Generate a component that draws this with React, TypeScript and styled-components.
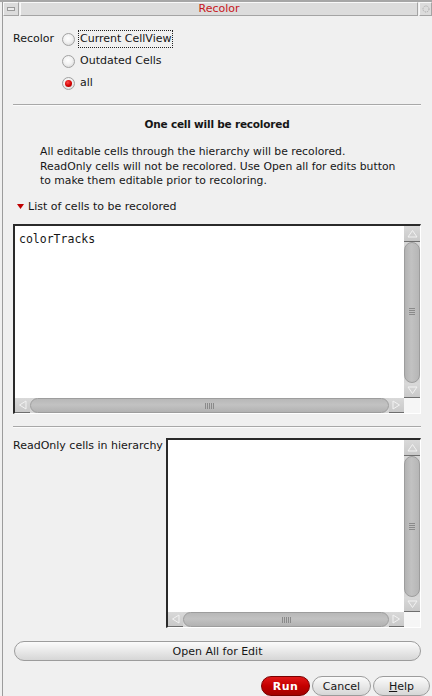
import React from 'react';
import styled, { createGlobalStyle } from 'styled-components';

const GlobalStyle = createGlobalStyle`
  html, body {
    margin: 0;
    padding: 0;
    background: #f0f0f0;
  }
  body {
    font-family: 'DejaVu Sans', 'Liberation Sans', sans-serif;
    font-size: 11px;
    color: #161616;
  }
`;

const Frame = styled.div`
  width: 432px;
  height: 696px;
  box-sizing: border-box;
  padding-left: 2px;
  border-top: 2px solid #a6a6a6;
  background: #f0f0f0;
  overflow: hidden;
`;

const Window = styled.div`
  height: 100%;
  border-left: 1px solid #9c9c9c;
  display: flex;
  flex-direction: column;
`;

const TitleBar = styled.div`
  display: flex;
  height: 14px;
  gap: 1px;
  background: #f0f0f0;
`;

const TitleBox = styled.div<{ $grow?: boolean; $w?: number }>`
  box-sizing: border-box;
  ${(p) => (p.$grow ? 'flex: 1;' : `width: ${p.$w}px;`)}
  height: 14px;
  background: #dcdcdc;
  border-top: 1px solid #f8f8f8;
  border-left: 1px solid #f8f8f8;
  border-right: 1px solid #a4a4a4;
  border-bottom: 1px solid #a4a4a4;
  display: flex;
  align-items: center;
  justify-content: center;
`;

const TitleText = styled.span`
  color: #c8151b;
  font-size: 11px;
  line-height: 12px;
`;

const MinGlyph = styled.div`
  width: 6px;
  height: 2px;
  border: 1px solid #9a9a9a;
  background: #ececec;
`;

const Body = styled.div`
  flex: 1;
  padding: 12px 11px 0 10px;
  display: flex;
  flex-direction: column;
`;

const RadioSection = styled.div`
  display: flex;
`;

const FieldLabel = styled.div<{ $w: number }>`
  width: ${(p) => p.$w}px;
  line-height: 22px;
  flex-shrink: 0;
`;

const Options = styled.div`
  display: flex;
  flex-direction: column;
`;

const Option = styled.label`
  height: 22px;
  display: flex;
  align-items: center;
  gap: 3px;
`;

const RadioDot = styled.span<{ $on?: boolean }>`
  box-sizing: border-box;
  width: 13px;
  height: 13px;
  border-radius: 50%;
  border: 1px solid #a2a2a2;
  background: radial-gradient(circle at 45% 40%, #ffffff 0%, #f2f2f2 45%, #cfcfcf 100%);
  display: flex;
  align-items: center;
  justify-content: center;
  &::after {
    content: '';
    display: ${(p) => (p.$on ? 'block' : 'none')};
    width: 7px;
    height: 7px;
    border-radius: 50%;
    background: radial-gradient(circle at 40% 35%, #ff4a4a 0%, #d20000 55%, #8c0000 100%);
  }
`;

const OptionText = styled.span<{ $focus?: boolean }>`
  padding: 1px 1px;
  border: 1px dotted ${(p) => (p.$focus ? '#222' : 'transparent')};
  line-height: 14px;
`;

const Separator = styled.div<{ $top: number }>`
  margin-top: ${(p) => p.$top}px;
  height: 1px;
  background: #a8a8a8;
  border-bottom: 1px solid #fbfbfb;
`;

const Heading = styled.div`
  margin-top: 11px;
  text-align: center;
  font-weight: bold;
  font-size: 10.5px;
  letter-spacing: -0.2px;
  line-height: 14px;
`;

const Paragraph = styled.p`
  margin: 14px 0 0;
  padding-left: 27px;
  font-size: 10.8px;
  line-height: 14.5px;
`;

const Disclosure = styled.div`
  margin-top: 11px;
  padding-left: 4px;
  display: flex;
  align-items: center;
  gap: 4px;
  line-height: 14px;
`;

const ListBox = styled.div<{ $top: number }>`
  margin-top: ${(p) => p.$top}px;
  box-sizing: border-box;
  height: 190px;
  border-top: 2px solid #2a2a2a;
  border-left: 2px solid #2a2a2a;
  border-right: 1px solid #ffffff;
  border-bottom: 1px solid #ffffff;
  display: grid;
  grid-template-columns: 1fr 16px;
  grid-template-rows: 1fr 15px;
  flex: 1;
`;

const ListContent = styled.div`
  background: #ffffff;
  padding: 6px 4px;
  font-family: 'DejaVu Sans Mono', 'Liberation Mono', monospace;
  font-size: 11.5px;
  line-height: 14px;
`;

const VScroll = styled.div`
  display: flex;
  flex-direction: column;
  background: #d6d6d6;
`;

const HScroll = styled.div`
  display: flex;
  background: #d6d6d6;
`;

const ArrowBtn = styled.div<{ $w: number; $h: number }>`
  box-sizing: border-box;
  width: ${(p) => p.$w}px;
  height: ${(p) => p.$h}px;
  flex-shrink: 0;
  background: linear-gradient(#d9d9d9, #c9c9c9);
  border-bottom: 1px solid #6e6e6e;
  display: flex;
  align-items: center;
  justify-content: center;
`;

const Thumb = styled.div<{ $vertical?: boolean }>`
  box-sizing: border-box;
  flex: 1;
  border: 1px solid #9d9d9d;
  border-radius: 8px;
  background: ${(p) =>
    p.$vertical
      ? 'linear-gradient(to right, #b2b2b2, #c2c2c2 45%, #b6b6b6)'
      : 'linear-gradient(#b8b8b8, #c2c2c2 45%, #b2b2b2)'};
  display: flex;
  align-items: center;
  justify-content: center;
`;

const Corner = styled.div`
  background: #f6f6f6;
`;

const Grip = ({ vertical }: { vertical?: boolean }) =>
  vertical ? (
    <svg width="6" height="8" viewBox="0 0 6 8">
      {[0.5, 2.5, 4.5, 6.5].map((y) => (
        <line key={y} x1="0" x2="6" y1={y} y2={y} stroke="#8a8a8a" strokeWidth="1" />
      ))}
    </svg>
  ) : (
    <svg width="9" height="6" viewBox="0 0 9 6">
      {[0.5, 2.5, 4.5, 6.5, 8.5].map((x) => (
        <line key={x} y1="0" y2="6" x1={x} x2={x} stroke="#8a8a8a" strokeWidth="1" />
      ))}
    </svg>
  );

const Arrow = ({ dir }: { dir: 'up' | 'down' | 'left' | 'right' }) => {
  const pts = {
    up: '1,8 5.5,1.5 10,8 1,8',
    down: '1,1 5.5,7.5 10,1 1,1',
    left: '8,1 1.5,5 8,9 8,1',
    right: '1,1 7.5,5 1,9 1,1',
  }[dir];
  const vert = dir === 'up' || dir === 'down';
  return (
    <svg width={vert ? 11 : 9} height={vert ? 9 : 10} viewBox={vert ? '0 0 11 9' : '0 0 9 10'}>
      <polyline points={pts} fill="none" stroke="#f2f2f2" strokeWidth="1" />
    </svg>
  );
};

const ScrollList = ({ top, children }: { top: number; children?: React.ReactNode }) => (
  <ListBox $top={top}>
    <ListContent>{children}</ListContent>
    <VScroll>
      <ArrowBtn $w={16} $h={16}>
        <Arrow dir="up" />
      </ArrowBtn>
      <Thumb $vertical>
        <Grip vertical />
      </Thumb>
      <ArrowBtn $w={16} $h={15}>
        <Arrow dir="down" />
      </ArrowBtn>
    </VScroll>
    <HScroll>
      <ArrowBtn $w={15} $h={15}>
        <Arrow dir="left" />
      </ArrowBtn>
      <Thumb>
        <Grip />
      </Thumb>
      <ArrowBtn $w={15} $h={15}>
        <Arrow dir="right" />
      </ArrowBtn>
    </HScroll>
    <Corner />
  </ListBox>
);

const ReadOnlySection = styled.div`
  display: flex;
`;

const ReadOnlyLabel = styled.div`
  width: 153px;
  flex-shrink: 0;
  margin-top: 11px;
  line-height: 14px;
`;

const WideButton = styled.button`
  margin-top: 13px;
  margin-left: 1px;
  height: 20px;
  box-sizing: border-box;
  border: 1px solid #9c9c9c;
  border-radius: 10px;
  background: linear-gradient(#fbfbfb, #e9e9e9 50%, #d6d6d6);
  font-family: inherit;
  font-size: 11px;
  color: #161616;
  padding: 0;
`;

const ButtonBar = styled.div`
  margin-top: 15px;
  margin-right: -9px;
  display: flex;
  justify-content: flex-end;
  gap: 2px;
`;

const DialogButton = styled.button<{ $w: number; $primary?: boolean }>`
  width: ${(p) => p.$w}px;
  height: 20px;
  box-sizing: border-box;
  border-radius: 10px;
  padding: 0;
  font-family: inherit;
  font-size: 11px;
  border: 1px solid ${(p) => (p.$primary ? '#7a0000' : '#9c9c9c')};
  background: ${(p) =>
    p.$primary
      ? 'linear-gradient(#e01818, #c40000 50%, #a20000)'
      : 'linear-gradient(#fbfbfb, #e9e9e9 50%, #d6d6d6)'};
  color: ${(p) => (p.$primary ? '#ffffff' : '#161616')};
  font-weight: ${(p) => (p.$primary ? 'bold' : 'normal')};
  letter-spacing: ${(p) => (p.$primary ? '0.5px' : '0')};
`;

const Mnemonic = styled.span`
  text-decoration: underline;
`;

const RedTriangle = () => (
  <svg width="7" height="5" viewBox="0 0 7 5">
    <polygon points="0,0 7,0 3.5,5" fill="#c00000" />
  </svg>
);

export default function App() {
  return (
    <>
      <GlobalStyle />
      <Frame>
        <Window>
          <TitleBar>
            <TitleBox $w={16}>
              <MinGlyph />
            </TitleBox>
            <TitleBox $grow>
              <TitleText>Recolor</TitleText>
            </TitleBox>
            <TitleBox $w={13}>
              <svg width="8" height="8" viewBox="0 0 8 8">
                <circle cx="4" cy="4" r="3" fill="none" stroke="#a8a8a8" strokeDasharray="1.2 1" />
              </svg>
            </TitleBox>
          </TitleBar>
          <Body>
            <RadioSection>
              <FieldLabel $w={49}>Recolor</FieldLabel>
              <Options>
                <Option>
                  <RadioDot />
                  <OptionText $focus>Current CellView</OptionText>
                </Option>
                <Option>
                  <RadioDot />
                  <OptionText>Outdated Cells</OptionText>
                </Option>
                <Option>
                  <RadioDot $on />
                  <OptionText>all</OptionText>
                </Option>
              </Options>
            </RadioSection>
            <Separator $top={10} />
            <Heading>One cell will be recolored</Heading>
            <Paragraph>
              All editable cells through the hierarchy will be recolored.
              <br />
              ReadOnly cells will not be recolored. Use Open all for edits button
              <br />
              to make them editable prior to recoloring.
            </Paragraph>
            <Disclosure>
              <RedTriangle />
              List of cells to be recolored
            </Disclosure>
            <ScrollList top={10}>colorTracks</ScrollList>
            <Separator $top={12} />
            <ReadOnlySection>
              <ReadOnlyLabel>ReadOnly cells in hierarchy</ReadOnlyLabel>
              <ScrollList top={10} />
            </ReadOnlySection>
            <WideButton>Open All for Edit</WideButton>
            <ButtonBar>
              <DialogButton $w={49} $primary>
                Run
              </DialogButton>
              <DialogButton $w={59}>Cancel</DialogButton>
              <DialogButton $w={57}>
                <Mnemonic>H</Mnemonic>elp
              </DialogButton>
            </ButtonBar>
          </Body>
        </Window>
      </Frame>
    </>
  );
}
